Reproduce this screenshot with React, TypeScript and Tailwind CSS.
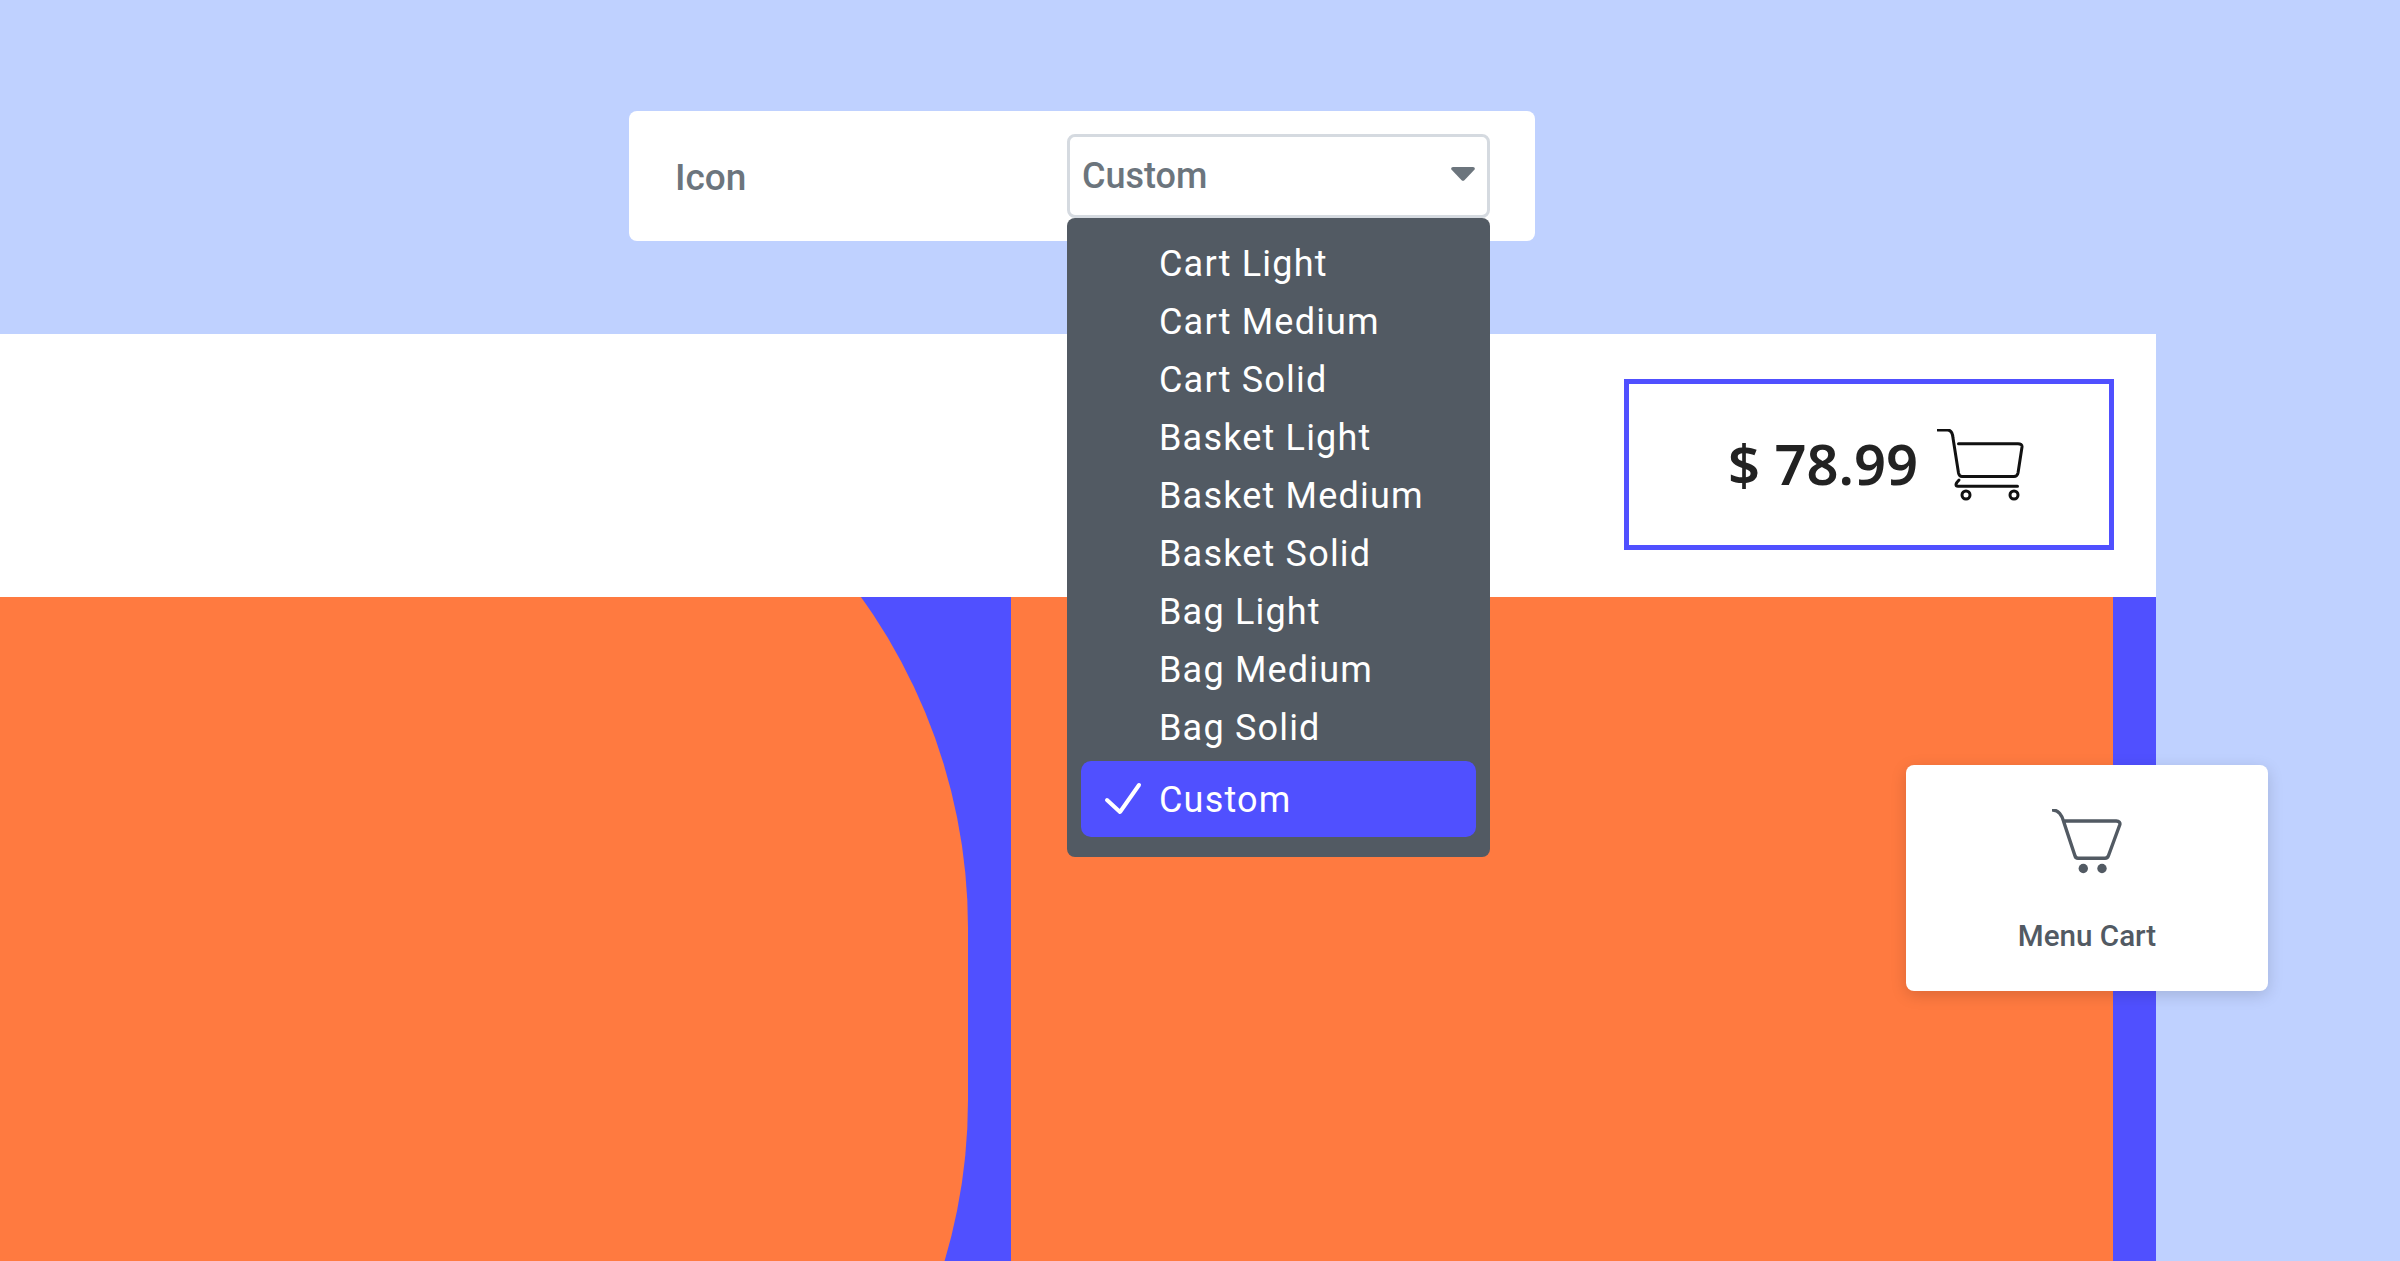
const options = [
  "Cart Light",
  "Cart Medium",
  "Cart Solid",
  "Basket Light",
  "Basket Medium",
  "Basket Solid",
  "Bag Light",
  "Bag Medium",
  "Bag Solid",
];

function PriceCart() {
  return (
    <svg width="87" height="72" viewBox="0 0 87 72" fill="none" stroke="#111" strokeWidth="3" strokeLinecap="round" strokeLinejoin="round">
      <path d="M1 1H10.5C13.5 1 15.6 4 16 9L21.5 44C22 46.5 23 47.5 25 47.5H77C79.5 47.5 80.5 46.3 81 44L85 18C85.3 15.7 83.5 14.7 81 14.7H21.5" />
      <path d="M22 51C20.5 52.5 19 54 19 55.5C19 56.8 20 57.3 21 57.3H80.5" />
      <circle cx="29" cy="66" r="4" />
      <circle cx="77" cy="66" r="4" />
    </svg>
  );
}

function MenuCart() {
  return (
    <svg width="70" height="66" viewBox="0 0 70 66" fill="none" stroke="#525a63" strokeWidth="3.4" strokeLinecap="round" strokeLinejoin="round">
      <path d="M1 1C6 1.2 10 6 11.7 12.7L22.7 46C23.3 48.3 24.3 49.3 26 49.3H53C55 49.3 56 48.3 56.7 46L67.7 16C68.5 13.5 67 12 64.3 12H11.7" />
      <circle cx="31.3" cy="59.5" r="4.7" fill="#525a63" stroke="none" />
      <circle cx="50" cy="59.5" r="4.7" fill="#525a63" stroke="none" />
    </svg>
  );
}

export default function App() {
  return (
    <div className="relative h-[1261px] w-[2400px] overflow-hidden bg-[#bfd1ff] font-['Roboto',sans-serif]">
      {/* settings row */}
      <div className="h-[334px] pt-[111px] pl-[629px]">
        <div className="flex h-[130px] w-[906px] rounded-lg bg-white pl-[46px]">
          <span className="mt-[42px] w-[392px] text-[37px] leading-[50px] font-medium text-[#6c757d]">Icon</span>
          <div className="relative mt-[23px] h-[84px] w-[423px]">
            <div className="flex h-full items-center justify-between rounded-lg border-[3px] border-[#d5dae0] bg-white pr-[12px] pl-[12px] pb-[1px]">
              <span className="text-[36px] leading-[50px] font-medium text-[#6c757d]">Custom</span>
              <svg className="mb-[3px]" width="24" height="14" viewBox="0 0 24 14" fill="#6c757d">
                <path d="M2 0H22C23.6 0 24.4 1.6 23.4 2.8L13.4 13.2C12.6 14 11.4 14 10.6 13.2L0.6 2.8C-0.4 1.6 0.4 0 2 0Z" />
              </svg>
            </div>
            {/* open dropdown */}
            <div className="absolute top-[84px] left-0 z-10 flex h-[639px] w-[423px] flex-col rounded-lg bg-[#525a63] px-[14px] pt-[16px] pb-[20px]">
              {options.map((o) => (
                <div key={o} className="flex h-[58px] shrink-0 items-center pt-[1px] pl-[78px] text-[36px] tracking-[0.033em] text-white">
                  {o}
                </div>
              ))}
              <div className="mt-[5px] flex h-[76px] items-center rounded-[10px] bg-[#5050ff] pl-[23px] text-[36px] tracking-[0.033em] text-white">
                <svg className="mr-[17px]" width="38" height="34" viewBox="0 0 38 34" fill="none" stroke="#fff" strokeWidth="4" strokeLinecap="round" strokeLinejoin="round">
                  <path d="M3 18L16 30L35 3" />
                </svg>
                <span className="pt-[1px]">Custom</span>
              </div>
            </div>
          </div>
        </div>
      </div>

      {/* header band */}
      <div className="flex h-[263px] w-[2156px] justify-end bg-white pt-[45px] pr-[42px]">
        <div className="flex h-[171px] w-[490px] items-center justify-center gap-[19px] border-[5px] border-[#5050ff] pl-[14px]">
          <span className="pb-[3px] font-['Noto_Sans',sans-serif] text-[56px] font-semibold text-[#222]">$ 78.99</span>
          <PriceCart />
        </div>
      </div>

      {/* orange section */}
      <div className="flex h-[664px] w-[2156px] overflow-hidden bg-[#5050ff]">
        <div className="-mt-[234px] h-[1302px] w-[968px] shrink-0 rounded-r-[565px] bg-[#ff7a40]" />
        <div className="ml-[43px] w-[1102px] shrink-0 bg-[#ff7a40]" />
      </div>

      {/* floating tile */}
      <div className="absolute top-[765px] left-[1906px] flex h-[226px] w-[362px] flex-col items-center rounded-lg bg-white pt-[44px] shadow-[0_4px_16px_rgba(0,0,0,0.15)]">
        <MenuCart />
        <span className="mt-[41px] text-[29.6px] leading-[40px] font-medium text-[#525a63]">Menu Cart</span>
      </div>
    </div>
  );
}
